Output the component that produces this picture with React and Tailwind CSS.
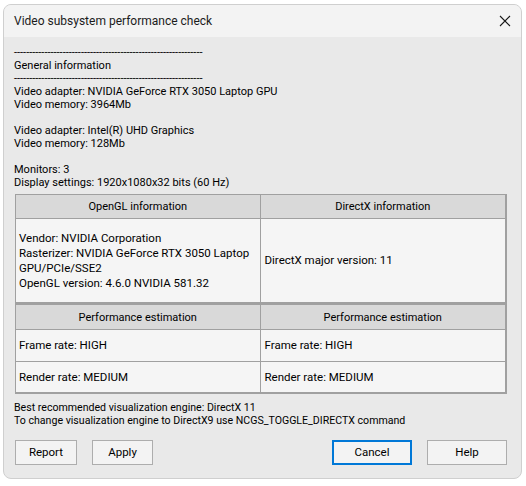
const dashes = "--------------------------------------------------------------";

function Button({ label, w, primary }) {
  return (
    <button
      className={
        "h-[25px] bg-[#f3f3f3] text-[11.5px] text-black flex items-center justify-center " +
        (primary ? "border-2 border-[#0078d7]" : "border border-[#adadad]")
      }
      style={{ width: w }}
    >
      {label}
    </button>
  );
}

export default function App() {
  return (
    <div className="w-[526px] h-[486px] bg-white pt-[4px] pl-[3px] font-['Roboto',sans-serif] text-black">
      <div className="w-[519px] h-[475px] rounded-[8px] border border-[#cfcfcf] bg-[#e9e9e9] overflow-hidden flex flex-col">
        {/* title bar */}
        <div className="h-[32px] shrink-0 bg-[#f3f3f3] flex items-center justify-between pl-[10px] pr-[9px]">
          <span className="text-[12px] text-[#1b1b1b]">Video subsystem performance check</span>
          <svg width="12" height="12" viewBox="0 0 12 12" className="mr-[1px]">
            <path d="M1 1 L11 11 M11 1 L1 11" stroke="#1b1b1b" strokeWidth="1.1" fill="none" />
          </svg>
        </div>

        <div className="flex-1 pl-[10px] pt-[9px]">
          <div className="text-[11px] leading-[13px]">
            <div className="whitespace-nowrap">{dashes}</div>
            <div>General information</div>
            <div className="whitespace-nowrap">{dashes}</div>
            <div>Video adapter: NVIDIA GeForce RTX 3050 Laptop GPU</div>
            <div>Video memory: 3964Mb</div>
            <div className="h-[13px]" />
            <div>Video adapter: Intel(R) UHD Graphics</div>
            <div>Video memory: 128Mb</div>
            <div className="h-[13px]" />
            <div>Monitors: 3</div>
            <div>Display settings: 1920x1080x32 bits (60 Hz)</div>
          </div>

          {/* info grid */}
          <div className="ml-[1px] mt-[5px] w-[492px] text-[11.5px] leading-[15px]">
            <div className="border-t border-l border-r-2 border-b-2 border-[#a0a0a0] grid grid-cols-2">
              <div className="h-[24px] bg-[#d9d9d9] border-r border-b border-[#a0a0a0] flex items-center justify-center text-[11px]">
                OpenGL information
              </div>
              <div className="h-[24px] bg-[#d9d9d9] border-b border-[#a0a0a0] flex items-center justify-center text-[11px]">
                DirectX information
              </div>
              <div className="h-[83px] bg-[#f5f5f5] border-r border-[#a0a0a0] flex flex-col justify-center pl-[3px]">
                <div>Vendor: NVIDIA Corporation</div>
                <div>Rasterizer: NVIDIA GeForce RTX 3050 Laptop</div>
                <div>GPU/PCIe/SSE2</div>
                <div>OpenGL version: 4.6.0 NVIDIA 581.32</div>
              </div>
              <div className="h-[83px] bg-[#f5f5f5] flex items-center pl-[4px]">
                DirectX major version: 11
              </div>
            </div>
            <div className="border-t border-l border-r-2 border-b-2 border-[#a0a0a0] grid grid-cols-2">
              <div className="h-[25px] bg-[#d9d9d9] border-r border-b border-[#a0a0a0] flex items-center justify-center text-[11px]">
                Performance estimation
              </div>
              <div className="h-[25px] bg-[#d9d9d9] border-b border-[#a0a0a0] flex items-center justify-center text-[11px]">
                Performance estimation
              </div>
              <div className="h-[32px] bg-[#f5f5f5] border-r border-b border-[#a0a0a0] flex items-center pl-[3px]">
                Frame rate: HIGH
              </div>
              <div className="h-[32px] bg-[#f5f5f5] border-b border-[#a0a0a0] flex items-center pl-[4px]">
                Frame rate: HIGH
              </div>
              <div className="h-[30px] bg-[#f5f5f5] border-r border-[#a0a0a0] flex items-center pl-[3px]">
                Render rate: MEDIUM
              </div>
              <div className="h-[30px] bg-[#f5f5f5] flex items-center pl-[4px]">
                Render rate: MEDIUM
              </div>
            </div>
          </div>

          <div className="mt-[7px] text-[10.6px] leading-[13px]">
            <div>Best recommended visualization engine: DirectX 11</div>
            <div>To change visualization engine to DirectX9 use NCGS_TOGGLE_DIRECTX command</div>
          </div>

          {/* buttons */}
          <div className="mt-[13px] ml-[1px] w-[492px] flex">
            <Button label="Report" w={62} />
            <div className="ml-[15px]">
              <Button label="Apply" w={61} />
            </div>
            <div className="ml-auto flex gap-[15px]">
              <Button label="Cancel" w={80} primary />
              <Button label="Help" w={80} />
            </div>
          </div>
        </div>
      </div>
    </div>
  );
}
